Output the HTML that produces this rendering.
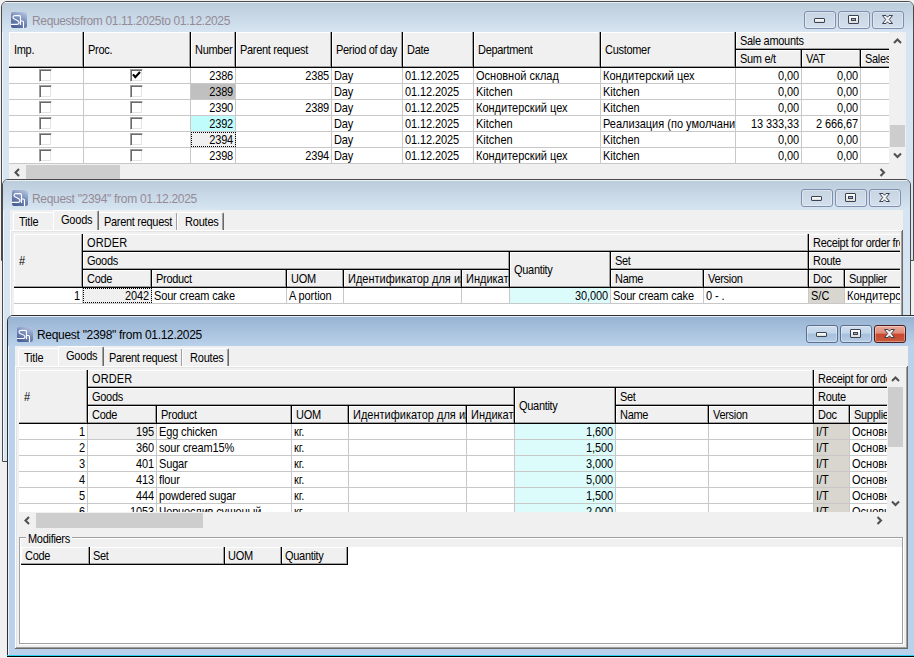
<!DOCTYPE html><html><head><meta charset="utf-8"><style>html,body{margin:0;padding:0;}body{width:914px;height:658px;position:relative;overflow:hidden;background:#f0f0f0;font-family:"Liberation Sans",sans-serif;}div{position:absolute;box-sizing:border-box;}.t{transform:scaleY(1.12);}svg{position:absolute;}</style></head><body><div style="left:1px;top:1px;width:913px;height:260px;border:1px solid #4a4a4a;border-radius:6px 6px 0 0;background:#d7e4f2;overflow:hidden;box-shadow:inset 1px 0 0 rgba(255,255,255,0.7)"><div style="left:0;top:0;width:911px;height:30px;background:linear-gradient(#bbccdb,#d7e5f2);border-top:1px solid rgba(255,255,255,0.45)"></div></div><svg style="left:11px;top:12px" width="16" height="16" viewBox="0 0 16 16" preserveAspectRatio="none"><defs><linearGradient id="ig11_12" x1="0.8" y1="0" x2="0.3" y2="1"><stop offset="0" stop-color="#b4c4e0"/><stop offset="0.45" stop-color="#7a8fbd"/><stop offset="1" stop-color="#4a5f94"/></linearGradient></defs><path d="M0,2 Q0,0 2,0 L12,0 Q16,0 16,4 L16,13.5 Q16,16 13.5,16 L2,16 Q0,16 0,14 Z" fill="url(#ig11_12)"/><path d="M0,12.3 L5.8,12.3 Q8,12.3 8,10.4 Q8,9.2 6.3,8.4 L3.5,7.1 Q2,6.4 2,5.2 Q2,3.6 4,3.6 L8.3,3.6 Q9.5,3.6 9.5,5 L9.5,13" fill="none" stroke="#fff" stroke-width="1.15"/><path d="M9.5,9 L11.3,9 Q12.5,9 12.5,10.3 L12.5,16" fill="none" stroke="#fff" stroke-width="1.15"/></svg><div class="" style="left:32px;top:13.84px;font-size:12px;line-height:14px;color:#948a96;white-space:nowrap;transform-origin:0 11.16px;letter-spacing:-0.35px;">Requestsfrom 01.11.2025to 01.12.2025</div><div style="left:804px;top:11px;width:32px;height:18px;border:1px solid #7f8eae;border-radius:3px;background:linear-gradient(#c7d4e2,#d3dfec);box-shadow:inset 0 0 0 1px rgba(255,255,255,0.35)"></div><div style="left:838px;top:11px;width:32px;height:18px;border:1px solid #7f8eae;border-radius:3px;background:linear-gradient(#c7d4e2,#d3dfec);box-shadow:inset 0 0 0 1px rgba(255,255,255,0.35)"></div><div style="left:872px;top:11px;width:32px;height:18px;border:1px solid #7f8eae;border-radius:3px;background:linear-gradient(#c7d4e2,#d3dfec);box-shadow:inset 0 0 0 1px rgba(255,255,255,0.35)"></div><div style="left:814px;top:18px;width:11px;height:5px;border:1px solid #3a4250;border-radius:1px;background:linear-gradient(#fff,#dcdcdc)"></div><div style="left:848px;top:15px;width:11px;height:9px;border:1px solid #3a4250;border-radius:1px;background:linear-gradient(#fff,#dcdcdc)"><div style="left:2px;top:2px;width:5px;height:3px;border:1px solid #3a4250;background:#9fb0c8"></div></div><svg style="left:882px;top:15px" width="11" height="9" viewBox="0 0 11 9"><path d="M0.5,0.5 L4,0.5 L5.5,2.2 L7,0.5 L10.5,0.5 L7.3,4.5 L10.5,8.5 L7,8.5 L5.5,6.8 L4,8.5 L0.5,8.5 L3.7,4.5 Z" fill="#f4f4f4" stroke="#3a4250" stroke-width="1" stroke-linejoin="round"/></svg><div style="left:9px;top:32px;width:897px;height:147px;background:#f0f0f0;"></div><div style="left:9px;top:68px;width:880px;height:95px;background:#fff;"></div><div style="left:9px;top:32px;width:880px;height:35px;background:#f0f0f0;"></div><div style="left:9px;top:32px;width:880px;height:1px;background:#fff;"></div><div style="left:0;top:0;width:889px;height:658px;overflow:hidden"><div style="left:9px;top:32px;width:74px;height:1px;background:#ffffff;"></div><div style="left:9px;top:32px;width:1px;height:35px;background:#ffffff;"></div><div style="left:82px;top:32px;width:1px;height:35px;background:#a0a0a0;"></div><div style="left:9px;top:66px;width:74px;height:1px;background:#a0a0a0;"></div><div style="left:83px;top:32px;width:1px;height:36px;background:#000;"></div><div style="left:9px;top:67px;width:74px;height:1px;background:#000;"></div><div style="left:84px;top:32px;width:106px;height:1px;background:#ffffff;"></div><div style="left:84px;top:32px;width:1px;height:35px;background:#ffffff;"></div><div style="left:189px;top:32px;width:1px;height:35px;background:#a0a0a0;"></div><div style="left:84px;top:66px;width:106px;height:1px;background:#a0a0a0;"></div><div style="left:190px;top:32px;width:1px;height:36px;background:#000;"></div><div style="left:83px;top:67px;width:107px;height:1px;background:#000;"></div><div style="left:191px;top:32px;width:44px;height:1px;background:#ffffff;"></div><div style="left:191px;top:32px;width:1px;height:35px;background:#ffffff;"></div><div style="left:234px;top:32px;width:1px;height:35px;background:#a0a0a0;"></div><div style="left:191px;top:66px;width:44px;height:1px;background:#a0a0a0;"></div><div style="left:235px;top:32px;width:1px;height:36px;background:#000;"></div><div style="left:190px;top:67px;width:45px;height:1px;background:#000;"></div><div style="left:236px;top:32px;width:95px;height:1px;background:#ffffff;"></div><div style="left:236px;top:32px;width:1px;height:35px;background:#ffffff;"></div><div style="left:330px;top:32px;width:1px;height:35px;background:#a0a0a0;"></div><div style="left:236px;top:66px;width:95px;height:1px;background:#a0a0a0;"></div><div style="left:331px;top:32px;width:1px;height:36px;background:#000;"></div><div style="left:235px;top:67px;width:96px;height:1px;background:#000;"></div><div style="left:332px;top:32px;width:70px;height:1px;background:#ffffff;"></div><div style="left:332px;top:32px;width:1px;height:35px;background:#ffffff;"></div><div style="left:401px;top:32px;width:1px;height:35px;background:#a0a0a0;"></div><div style="left:332px;top:66px;width:70px;height:1px;background:#a0a0a0;"></div><div style="left:402px;top:32px;width:1px;height:36px;background:#000;"></div><div style="left:331px;top:67px;width:71px;height:1px;background:#000;"></div><div style="left:403px;top:32px;width:70px;height:1px;background:#ffffff;"></div><div style="left:403px;top:32px;width:1px;height:35px;background:#ffffff;"></div><div style="left:472px;top:32px;width:1px;height:35px;background:#a0a0a0;"></div><div style="left:403px;top:66px;width:70px;height:1px;background:#a0a0a0;"></div><div style="left:473px;top:32px;width:1px;height:36px;background:#000;"></div><div style="left:402px;top:67px;width:71px;height:1px;background:#000;"></div><div style="left:474px;top:32px;width:126px;height:1px;background:#ffffff;"></div><div style="left:474px;top:32px;width:1px;height:35px;background:#ffffff;"></div><div style="left:599px;top:32px;width:1px;height:35px;background:#a0a0a0;"></div><div style="left:474px;top:66px;width:126px;height:1px;background:#a0a0a0;"></div><div style="left:600px;top:32px;width:1px;height:36px;background:#000;"></div><div style="left:473px;top:67px;width:127px;height:1px;background:#000;"></div><div style="left:601px;top:32px;width:134px;height:1px;background:#ffffff;"></div><div style="left:601px;top:32px;width:1px;height:35px;background:#ffffff;"></div><div style="left:734px;top:32px;width:1px;height:35px;background:#a0a0a0;"></div><div style="left:601px;top:66px;width:134px;height:1px;background:#a0a0a0;"></div><div style="left:735px;top:32px;width:1px;height:36px;background:#000;"></div><div style="left:600px;top:67px;width:135px;height:1px;background:#000;"></div><div style="left:736px;top:32px;width:464px;height:1px;background:#ffffff;"></div><div style="left:736px;top:32px;width:1px;height:17px;background:#ffffff;"></div><div style="left:1199px;top:32px;width:1px;height:17px;background:#a0a0a0;"></div><div style="left:736px;top:48px;width:464px;height:1px;background:#a0a0a0;"></div><div style="left:1200px;top:32px;width:1px;height:18px;background:#000;"></div><div style="left:735px;top:49px;width:465px;height:1px;background:#000;"></div><div style="left:736px;top:50px;width:65px;height:1px;background:#ffffff;"></div><div style="left:736px;top:50px;width:1px;height:17px;background:#ffffff;"></div><div style="left:800px;top:50px;width:1px;height:17px;background:#a0a0a0;"></div><div style="left:736px;top:66px;width:65px;height:1px;background:#a0a0a0;"></div><div style="left:801px;top:49px;width:1px;height:19px;background:#000;"></div><div style="left:735px;top:67px;width:66px;height:1px;background:#000;"></div><div style="left:802px;top:50px;width:58px;height:1px;background:#ffffff;"></div><div style="left:802px;top:50px;width:1px;height:17px;background:#ffffff;"></div><div style="left:859px;top:50px;width:1px;height:17px;background:#a0a0a0;"></div><div style="left:802px;top:66px;width:58px;height:1px;background:#a0a0a0;"></div><div style="left:860px;top:49px;width:1px;height:19px;background:#000;"></div><div style="left:801px;top:67px;width:59px;height:1px;background:#000;"></div><div style="left:861px;top:50px;width:99px;height:1px;background:#ffffff;"></div><div style="left:861px;top:50px;width:1px;height:17px;background:#ffffff;"></div><div style="left:959px;top:50px;width:1px;height:17px;background:#a0a0a0;"></div><div style="left:861px;top:66px;width:99px;height:1px;background:#a0a0a0;"></div><div style="left:960px;top:49px;width:1px;height:19px;background:#000;"></div><div style="left:860px;top:67px;width:100px;height:1px;background:#000;"></div></div><div class="t" style="left:14px;top:43.19px;font-size:11px;line-height:14px;color:#000;white-space:nowrap;transform-origin:0 10.81px;letter-spacing:-0.3px;">Imp.</div><div class="t" style="left:88px;top:43.19px;font-size:11px;line-height:14px;color:#000;white-space:nowrap;transform-origin:0 10.81px;letter-spacing:-0.3px;">Proc.</div><div class="t" style="left:195px;top:43.19px;font-size:11px;line-height:14px;color:#000;white-space:nowrap;transform-origin:0 10.81px;letter-spacing:-0.3px;">Number</div><div class="t" style="left:240px;top:43.19px;font-size:11px;line-height:14px;color:#000;white-space:nowrap;transform-origin:0 10.81px;letter-spacing:-0.3px;">Parent request</div><div class="t" style="left:336px;top:43.19px;font-size:11px;line-height:14px;color:#000;white-space:nowrap;transform-origin:0 10.81px;letter-spacing:-0.3px;">Period of day</div><div class="t" style="left:407px;top:43.19px;font-size:11px;line-height:14px;color:#000;white-space:nowrap;transform-origin:0 10.81px;letter-spacing:-0.3px;">Date</div><div class="t" style="left:478px;top:43.19px;font-size:11px;line-height:14px;color:#000;white-space:nowrap;transform-origin:0 10.81px;letter-spacing:-0.3px;">Department</div><div class="t" style="left:605px;top:43.19px;font-size:11px;line-height:14px;color:#000;white-space:nowrap;transform-origin:0 10.81px;letter-spacing:-0.3px;">Customer</div><div class="t" style="left:740px;top:34.19px;font-size:11px;line-height:14px;color:#000;white-space:nowrap;transform-origin:0 10.81px;letter-spacing:-0.3px;">Sale amounts</div><div class="t" style="left:740px;top:52.19px;font-size:11px;line-height:14px;color:#000;white-space:nowrap;transform-origin:0 10.81px;letter-spacing:-0.3px;">Sum e/t</div><div class="t" style="left:806px;top:52.19px;font-size:11px;line-height:14px;color:#000;white-space:nowrap;transform-origin:0 10.81px;letter-spacing:-0.3px;">VAT</div><div style="left:861px;top:40px;width:28px;height:26px;overflow:hidden;"><div class="t" style="left:4px;top:12.19px;font-size:11px;line-height:14px;color:#000;white-space:nowrap;transform-origin:0 10.81px;letter-spacing:-0.3px;">Sales</div></div><div style="left:9px;top:83px;width:880px;height:1px;background:#c8c8c8;"></div><div style="left:9px;top:99px;width:880px;height:1px;background:#c8c8c8;"></div><div style="left:191px;top:84px;width:44px;height:15px;background:#c0c0c0;"></div><div style="left:9px;top:115px;width:880px;height:1px;background:#c8c8c8;"></div><div style="left:9px;top:131px;width:880px;height:1px;background:#c8c8c8;"></div><div style="left:191px;top:116px;width:44px;height:15px;background:#c0fcfc;"></div><div style="left:9px;top:147px;width:880px;height:1px;background:#c8c8c8;"></div><div style="left:191px;top:132px;width:44px;height:15px;background:#f0f0f0;"></div><div style="left:9px;top:163px;width:880px;height:1px;background:#c8c8c8;"></div><div style="left:83px;top:68px;width:1px;height:95px;background:#c8c8c8;"></div><div style="left:190px;top:68px;width:1px;height:95px;background:#c8c8c8;"></div><div style="left:235px;top:68px;width:1px;height:95px;background:#c8c8c8;"></div><div style="left:331px;top:68px;width:1px;height:95px;background:#c8c8c8;"></div><div style="left:402px;top:68px;width:1px;height:95px;background:#c8c8c8;"></div><div style="left:473px;top:68px;width:1px;height:95px;background:#c8c8c8;"></div><div style="left:600px;top:68px;width:1px;height:95px;background:#c8c8c8;"></div><div style="left:735px;top:68px;width:1px;height:95px;background:#c8c8c8;"></div><div style="left:801px;top:68px;width:1px;height:95px;background:#c8c8c8;"></div><div style="left:860px;top:68px;width:1px;height:95px;background:#c8c8c8;"></div><div style="left:191px;top:132px;width:45px;height:15px;border:1px dotted #000;"></div><div style="left:39px;top:69px;width:13px;height:13px;background:#fff;border-top:1px solid #a0a0a0;border-left:1px solid #a0a0a0;border-right:1px solid #fff;border-bottom:1px solid #fff;box-shadow:inset 1px 1px 0 #696969, inset -1px -1px 0 #e3e3e3"></div><div style="left:130px;top:69px;width:13px;height:13px;background:#fff;border-top:1px solid #a0a0a0;border-left:1px solid #a0a0a0;border-right:1px solid #fff;border-bottom:1px solid #fff;box-shadow:inset 1px 1px 0 #696969, inset -1px -1px 0 #e3e3e3"></div><svg style="left:130px;top:69px" width="12" height="12" viewBox="0 0 12 12"><path d="M3,5.4 L5.3,8.2 L10,3" fill="none" stroke="#000" stroke-width="2.1"/></svg><div style="left:191px;top:60px;width:44px;height:26px;overflow:hidden;"><div class="t" style="right:2px;top:9.19px;transform-origin:0 10.81px;font-size:11px;line-height:14px;white-space:nowrap;letter-spacing:-0.2px;color:#000">2386</div></div><div style="left:236px;top:60px;width:95px;height:26px;overflow:hidden;"><div class="t" style="right:2px;top:9.19px;transform-origin:0 10.81px;font-size:11px;line-height:14px;white-space:nowrap;letter-spacing:-0.2px;color:#000">2385</div></div><div style="left:332px;top:60px;width:70px;height:26px;overflow:hidden;"><div class="t" style="left:2px;top:9.19px;font-size:11px;line-height:14px;color:#000;white-space:nowrap;transform-origin:0 10.81px;letter-spacing:-0.2px;">Day</div></div><div style="left:403px;top:60px;width:70px;height:26px;overflow:hidden;"><div class="t" style="left:2px;top:9.19px;font-size:11px;line-height:14px;color:#000;white-space:nowrap;transform-origin:0 10.81px;letter-spacing:-0.1px;">01.12.2025</div></div><div style="left:474px;top:60px;width:126px;height:26px;overflow:hidden;"><div class="t" style="left:2px;top:9.19px;font-size:11px;line-height:14px;color:#000;white-space:nowrap;transform-origin:0 10.81px;letter-spacing:0px;">Основной склад</div></div><div style="left:601px;top:60px;width:134px;height:26px;overflow:hidden;"><div class="t" style="left:2px;top:9.19px;font-size:11px;line-height:14px;color:#000;white-space:nowrap;transform-origin:0 10.81px;letter-spacing:0px;">Кондитерский цех</div></div><div style="left:736px;top:60px;width:65px;height:26px;overflow:hidden;"><div class="t" style="right:2px;top:9.19px;transform-origin:0 10.81px;font-size:11px;line-height:14px;white-space:nowrap;letter-spacing:-0.1px;color:#000">0,00</div></div><div style="left:802px;top:60px;width:58px;height:26px;overflow:hidden;"><div class="t" style="right:2px;top:9.19px;transform-origin:0 10.81px;font-size:11px;line-height:14px;white-space:nowrap;letter-spacing:-0.1px;color:#000">0,00</div></div><div style="left:39px;top:85px;width:13px;height:13px;background:#fff;border-top:1px solid #a0a0a0;border-left:1px solid #a0a0a0;border-right:1px solid #fff;border-bottom:1px solid #fff;box-shadow:inset 1px 1px 0 #696969, inset -1px -1px 0 #e3e3e3"></div><div style="left:130px;top:85px;width:13px;height:13px;background:#fff;border-top:1px solid #a0a0a0;border-left:1px solid #a0a0a0;border-right:1px solid #fff;border-bottom:1px solid #fff;box-shadow:inset 1px 1px 0 #696969, inset -1px -1px 0 #e3e3e3"></div><div style="left:191px;top:76px;width:44px;height:26px;overflow:hidden;"><div class="t" style="right:2px;top:9.19px;transform-origin:0 10.81px;font-size:11px;line-height:14px;white-space:nowrap;letter-spacing:-0.2px;color:#000">2389</div></div><div style="left:236px;top:76px;width:95px;height:26px;overflow:hidden;"><div class="t" style="right:2px;top:9.19px;transform-origin:0 10.81px;font-size:11px;line-height:14px;white-space:nowrap;letter-spacing:-0.2px;color:#000"></div></div><div style="left:332px;top:76px;width:70px;height:26px;overflow:hidden;"><div class="t" style="left:2px;top:9.19px;font-size:11px;line-height:14px;color:#000;white-space:nowrap;transform-origin:0 10.81px;letter-spacing:-0.2px;">Day</div></div><div style="left:403px;top:76px;width:70px;height:26px;overflow:hidden;"><div class="t" style="left:2px;top:9.19px;font-size:11px;line-height:14px;color:#000;white-space:nowrap;transform-origin:0 10.81px;letter-spacing:-0.1px;">01.12.2025</div></div><div style="left:474px;top:76px;width:126px;height:26px;overflow:hidden;"><div class="t" style="left:2px;top:9.19px;font-size:11px;line-height:14px;color:#000;white-space:nowrap;transform-origin:0 10.81px;letter-spacing:0px;">Kitchen</div></div><div style="left:601px;top:76px;width:134px;height:26px;overflow:hidden;"><div class="t" style="left:2px;top:9.19px;font-size:11px;line-height:14px;color:#000;white-space:nowrap;transform-origin:0 10.81px;letter-spacing:0px;">Kitchen</div></div><div style="left:736px;top:76px;width:65px;height:26px;overflow:hidden;"><div class="t" style="right:2px;top:9.19px;transform-origin:0 10.81px;font-size:11px;line-height:14px;white-space:nowrap;letter-spacing:-0.1px;color:#000">0,00</div></div><div style="left:802px;top:76px;width:58px;height:26px;overflow:hidden;"><div class="t" style="right:2px;top:9.19px;transform-origin:0 10.81px;font-size:11px;line-height:14px;white-space:nowrap;letter-spacing:-0.1px;color:#000">0,00</div></div><div style="left:39px;top:101px;width:13px;height:13px;background:#fff;border-top:1px solid #a0a0a0;border-left:1px solid #a0a0a0;border-right:1px solid #fff;border-bottom:1px solid #fff;box-shadow:inset 1px 1px 0 #696969, inset -1px -1px 0 #e3e3e3"></div><div style="left:130px;top:101px;width:13px;height:13px;background:#fff;border-top:1px solid #a0a0a0;border-left:1px solid #a0a0a0;border-right:1px solid #fff;border-bottom:1px solid #fff;box-shadow:inset 1px 1px 0 #696969, inset -1px -1px 0 #e3e3e3"></div><div style="left:191px;top:92px;width:44px;height:26px;overflow:hidden;"><div class="t" style="right:2px;top:9.19px;transform-origin:0 10.81px;font-size:11px;line-height:14px;white-space:nowrap;letter-spacing:-0.2px;color:#000">2390</div></div><div style="left:236px;top:92px;width:95px;height:26px;overflow:hidden;"><div class="t" style="right:2px;top:9.19px;transform-origin:0 10.81px;font-size:11px;line-height:14px;white-space:nowrap;letter-spacing:-0.2px;color:#000">2389</div></div><div style="left:332px;top:92px;width:70px;height:26px;overflow:hidden;"><div class="t" style="left:2px;top:9.19px;font-size:11px;line-height:14px;color:#000;white-space:nowrap;transform-origin:0 10.81px;letter-spacing:-0.2px;">Day</div></div><div style="left:403px;top:92px;width:70px;height:26px;overflow:hidden;"><div class="t" style="left:2px;top:9.19px;font-size:11px;line-height:14px;color:#000;white-space:nowrap;transform-origin:0 10.81px;letter-spacing:-0.1px;">01.12.2025</div></div><div style="left:474px;top:92px;width:126px;height:26px;overflow:hidden;"><div class="t" style="left:2px;top:9.19px;font-size:11px;line-height:14px;color:#000;white-space:nowrap;transform-origin:0 10.81px;letter-spacing:0px;">Кондитерский цех</div></div><div style="left:601px;top:92px;width:134px;height:26px;overflow:hidden;"><div class="t" style="left:2px;top:9.19px;font-size:11px;line-height:14px;color:#000;white-space:nowrap;transform-origin:0 10.81px;letter-spacing:0px;">Kitchen</div></div><div style="left:736px;top:92px;width:65px;height:26px;overflow:hidden;"><div class="t" style="right:2px;top:9.19px;transform-origin:0 10.81px;font-size:11px;line-height:14px;white-space:nowrap;letter-spacing:-0.1px;color:#000">0,00</div></div><div style="left:802px;top:92px;width:58px;height:26px;overflow:hidden;"><div class="t" style="right:2px;top:9.19px;transform-origin:0 10.81px;font-size:11px;line-height:14px;white-space:nowrap;letter-spacing:-0.1px;color:#000">0,00</div></div><div style="left:39px;top:117px;width:13px;height:13px;background:#fff;border-top:1px solid #a0a0a0;border-left:1px solid #a0a0a0;border-right:1px solid #fff;border-bottom:1px solid #fff;box-shadow:inset 1px 1px 0 #696969, inset -1px -1px 0 #e3e3e3"></div><div style="left:130px;top:117px;width:13px;height:13px;background:#fff;border-top:1px solid #a0a0a0;border-left:1px solid #a0a0a0;border-right:1px solid #fff;border-bottom:1px solid #fff;box-shadow:inset 1px 1px 0 #696969, inset -1px -1px 0 #e3e3e3"></div><div style="left:191px;top:108px;width:44px;height:26px;overflow:hidden;"><div class="t" style="right:2px;top:9.19px;transform-origin:0 10.81px;font-size:11px;line-height:14px;white-space:nowrap;letter-spacing:-0.2px;color:#000">2392</div></div><div style="left:236px;top:108px;width:95px;height:26px;overflow:hidden;"><div class="t" style="right:2px;top:9.19px;transform-origin:0 10.81px;font-size:11px;line-height:14px;white-space:nowrap;letter-spacing:-0.2px;color:#000"></div></div><div style="left:332px;top:108px;width:70px;height:26px;overflow:hidden;"><div class="t" style="left:2px;top:9.19px;font-size:11px;line-height:14px;color:#000;white-space:nowrap;transform-origin:0 10.81px;letter-spacing:-0.2px;">Day</div></div><div style="left:403px;top:108px;width:70px;height:26px;overflow:hidden;"><div class="t" style="left:2px;top:9.19px;font-size:11px;line-height:14px;color:#000;white-space:nowrap;transform-origin:0 10.81px;letter-spacing:-0.1px;">01.12.2025</div></div><div style="left:474px;top:108px;width:126px;height:26px;overflow:hidden;"><div class="t" style="left:2px;top:9.19px;font-size:11px;line-height:14px;color:#000;white-space:nowrap;transform-origin:0 10.81px;letter-spacing:0px;">Kitchen</div></div><div style="left:601px;top:108px;width:134px;height:26px;overflow:hidden;"><div class="t" style="left:2px;top:9.19px;font-size:11px;line-height:14px;color:#000;white-space:nowrap;transform-origin:0 10.81px;letter-spacing:0px;">Реализация (по умолчанию)</div></div><div style="left:736px;top:108px;width:65px;height:26px;overflow:hidden;"><div class="t" style="right:2px;top:9.19px;transform-origin:0 10.81px;font-size:11px;line-height:14px;white-space:nowrap;letter-spacing:-0.1px;color:#000">13 333,33</div></div><div style="left:802px;top:108px;width:58px;height:26px;overflow:hidden;"><div class="t" style="right:2px;top:9.19px;transform-origin:0 10.81px;font-size:11px;line-height:14px;white-space:nowrap;letter-spacing:-0.1px;color:#000">2 666,67</div></div><div style="left:39px;top:133px;width:13px;height:13px;background:#fff;border-top:1px solid #a0a0a0;border-left:1px solid #a0a0a0;border-right:1px solid #fff;border-bottom:1px solid #fff;box-shadow:inset 1px 1px 0 #696969, inset -1px -1px 0 #e3e3e3"></div><div style="left:130px;top:133px;width:13px;height:13px;background:#fff;border-top:1px solid #a0a0a0;border-left:1px solid #a0a0a0;border-right:1px solid #fff;border-bottom:1px solid #fff;box-shadow:inset 1px 1px 0 #696969, inset -1px -1px 0 #e3e3e3"></div><div style="left:191px;top:124px;width:44px;height:26px;overflow:hidden;"><div class="t" style="right:2px;top:9.19px;transform-origin:0 10.81px;font-size:11px;line-height:14px;white-space:nowrap;letter-spacing:-0.2px;color:#000">2394</div></div><div style="left:236px;top:124px;width:95px;height:26px;overflow:hidden;"><div class="t" style="right:2px;top:9.19px;transform-origin:0 10.81px;font-size:11px;line-height:14px;white-space:nowrap;letter-spacing:-0.2px;color:#000"></div></div><div style="left:332px;top:124px;width:70px;height:26px;overflow:hidden;"><div class="t" style="left:2px;top:9.19px;font-size:11px;line-height:14px;color:#000;white-space:nowrap;transform-origin:0 10.81px;letter-spacing:-0.2px;">Day</div></div><div style="left:403px;top:124px;width:70px;height:26px;overflow:hidden;"><div class="t" style="left:2px;top:9.19px;font-size:11px;line-height:14px;color:#000;white-space:nowrap;transform-origin:0 10.81px;letter-spacing:-0.1px;">01.12.2025</div></div><div style="left:474px;top:124px;width:126px;height:26px;overflow:hidden;"><div class="t" style="left:2px;top:9.19px;font-size:11px;line-height:14px;color:#000;white-space:nowrap;transform-origin:0 10.81px;letter-spacing:0px;">Kitchen</div></div><div style="left:601px;top:124px;width:134px;height:26px;overflow:hidden;"><div class="t" style="left:2px;top:9.19px;font-size:11px;line-height:14px;color:#000;white-space:nowrap;transform-origin:0 10.81px;letter-spacing:0px;">Kitchen</div></div><div style="left:736px;top:124px;width:65px;height:26px;overflow:hidden;"><div class="t" style="right:2px;top:9.19px;transform-origin:0 10.81px;font-size:11px;line-height:14px;white-space:nowrap;letter-spacing:-0.1px;color:#000">0,00</div></div><div style="left:802px;top:124px;width:58px;height:26px;overflow:hidden;"><div class="t" style="right:2px;top:9.19px;transform-origin:0 10.81px;font-size:11px;line-height:14px;white-space:nowrap;letter-spacing:-0.1px;color:#000">0,00</div></div><div style="left:39px;top:149px;width:13px;height:13px;background:#fff;border-top:1px solid #a0a0a0;border-left:1px solid #a0a0a0;border-right:1px solid #fff;border-bottom:1px solid #fff;box-shadow:inset 1px 1px 0 #696969, inset -1px -1px 0 #e3e3e3"></div><div style="left:130px;top:149px;width:13px;height:13px;background:#fff;border-top:1px solid #a0a0a0;border-left:1px solid #a0a0a0;border-right:1px solid #fff;border-bottom:1px solid #fff;box-shadow:inset 1px 1px 0 #696969, inset -1px -1px 0 #e3e3e3"></div><div style="left:191px;top:140px;width:44px;height:26px;overflow:hidden;"><div class="t" style="right:2px;top:9.19px;transform-origin:0 10.81px;font-size:11px;line-height:14px;white-space:nowrap;letter-spacing:-0.2px;color:#000">2398</div></div><div style="left:236px;top:140px;width:95px;height:26px;overflow:hidden;"><div class="t" style="right:2px;top:9.19px;transform-origin:0 10.81px;font-size:11px;line-height:14px;white-space:nowrap;letter-spacing:-0.2px;color:#000">2394</div></div><div style="left:332px;top:140px;width:70px;height:26px;overflow:hidden;"><div class="t" style="left:2px;top:9.19px;font-size:11px;line-height:14px;color:#000;white-space:nowrap;transform-origin:0 10.81px;letter-spacing:-0.2px;">Day</div></div><div style="left:403px;top:140px;width:70px;height:26px;overflow:hidden;"><div class="t" style="left:2px;top:9.19px;font-size:11px;line-height:14px;color:#000;white-space:nowrap;transform-origin:0 10.81px;letter-spacing:-0.1px;">01.12.2025</div></div><div style="left:474px;top:140px;width:126px;height:26px;overflow:hidden;"><div class="t" style="left:2px;top:9.19px;font-size:11px;line-height:14px;color:#000;white-space:nowrap;transform-origin:0 10.81px;letter-spacing:0px;">Кондитерский цех</div></div><div style="left:601px;top:140px;width:134px;height:26px;overflow:hidden;"><div class="t" style="left:2px;top:9.19px;font-size:11px;line-height:14px;color:#000;white-space:nowrap;transform-origin:0 10.81px;letter-spacing:0px;">Kitchen</div></div><div style="left:736px;top:140px;width:65px;height:26px;overflow:hidden;"><div class="t" style="right:2px;top:9.19px;transform-origin:0 10.81px;font-size:11px;line-height:14px;white-space:nowrap;letter-spacing:-0.1px;color:#000">0,00</div></div><div style="left:802px;top:140px;width:58px;height:26px;overflow:hidden;"><div class="t" style="right:2px;top:9.19px;transform-origin:0 10.81px;font-size:11px;line-height:14px;white-space:nowrap;letter-spacing:-0.1px;color:#000">0,00</div></div><div style="left:889px;top:32px;width:17px;height:131px;background:#f0f0f0;"></div><div style="left:890px;top:125px;width:15px;height:22px;background:#cdcdcd;"></div><div style="left:9px;top:164px;width:880px;height:15px;background:#f0f0f0;"></div><div style="left:889px;top:163px;width:17px;height:16px;background:#f0f0f0;"></div><div style="left:26px;top:165px;width:94px;height:14px;background:#cdcdcd;"></div><svg style="left:893px;top:38px" width="9" height="7" viewBox="0 0 9 7"><path d="M1,5 L4.5,1.5 L8,5" fill="none" stroke="#505050" stroke-width="2.1"/></svg><svg style="left:893px;top:152px" width="9" height="7" viewBox="0 0 9 7"><path d="M1,1.5 L4.5,5 L8,1.5" fill="none" stroke="#505050" stroke-width="2.1"/></svg><svg style="left:14px;top:168px" width="7" height="9" viewBox="0 0 7 9"><path d="M5,1 L1.5,4.5 L5,8" fill="none" stroke="#505050" stroke-width="2.1"/></svg><svg style="left:879px;top:168px" width="7" height="9" viewBox="0 0 7 9"><path d="M1.5,1 L5,4.5 L1.5,8" fill="none" stroke="#505050" stroke-width="2.1"/></svg><div style="left:2px;top:179px;width:909px;height:283px;border:1px solid #4a4a4a;border-radius:6px 6px 0 0;background:#d7e4f2;overflow:hidden;box-shadow:inset 1px 0 0 rgba(255,255,255,0.7)"><div style="left:0;top:0;width:907px;height:30px;background:linear-gradient(#bbccdb,#d7e5f2);border-top:1px solid rgba(255,255,255,0.45)"></div></div><svg style="left:12px;top:190px" width="16" height="16" viewBox="0 0 16 16" preserveAspectRatio="none"><defs><linearGradient id="ig12_190" x1="0.8" y1="0" x2="0.3" y2="1"><stop offset="0" stop-color="#b4c4e0"/><stop offset="0.45" stop-color="#7a8fbd"/><stop offset="1" stop-color="#4a5f94"/></linearGradient></defs><path d="M0,2 Q0,0 2,0 L12,0 Q16,0 16,4 L16,13.5 Q16,16 13.5,16 L2,16 Q0,16 0,14 Z" fill="url(#ig12_190)"/><path d="M0,12.3 L5.8,12.3 Q8,12.3 8,10.4 Q8,9.2 6.3,8.4 L3.5,7.1 Q2,6.4 2,5.2 Q2,3.6 4,3.6 L8.3,3.6 Q9.5,3.6 9.5,5 L9.5,13" fill="none" stroke="#fff" stroke-width="1.15"/><path d="M9.5,9 L11.3,9 Q12.5,9 12.5,10.3 L12.5,16" fill="none" stroke="#fff" stroke-width="1.15"/></svg><div class="" style="left:32px;top:191.84px;font-size:12px;line-height:14px;color:#948a96;white-space:nowrap;transform-origin:0 11.16px;letter-spacing:-0.3px;">Request "2394" from 01.12.2025</div><div style="left:801px;top:189px;width:32px;height:18px;border:1px solid #7f8eae;border-radius:3px;background:linear-gradient(#c7d4e2,#d3dfec);box-shadow:inset 0 0 0 1px rgba(255,255,255,0.35)"></div><div style="left:835px;top:189px;width:32px;height:18px;border:1px solid #7f8eae;border-radius:3px;background:linear-gradient(#c7d4e2,#d3dfec);box-shadow:inset 0 0 0 1px rgba(255,255,255,0.35)"></div><div style="left:869px;top:189px;width:32px;height:18px;border:1px solid #7f8eae;border-radius:3px;background:linear-gradient(#c7d4e2,#d3dfec);box-shadow:inset 0 0 0 1px rgba(255,255,255,0.35)"></div><div style="left:811px;top:196px;width:11px;height:5px;border:1px solid #3a4250;border-radius:1px;background:linear-gradient(#fff,#dcdcdc)"></div><div style="left:845px;top:193px;width:11px;height:9px;border:1px solid #3a4250;border-radius:1px;background:linear-gradient(#fff,#dcdcdc)"><div style="left:2px;top:2px;width:5px;height:3px;border:1px solid #3a4250;background:#9fb0c8"></div></div><svg style="left:879px;top:193px" width="11" height="9" viewBox="0 0 11 9"><path d="M0.5,0.5 L4,0.5 L5.5,2.2 L7,0.5 L10.5,0.5 L7.3,4.5 L10.5,8.5 L7,8.5 L5.5,6.8 L4,8.5 L0.5,8.5 L3.7,4.5 Z" fill="#f4f4f4" stroke="#3a4250" stroke-width="1" stroke-linejoin="round"/></svg><div style="left:10px;top:210px;width:893px;height:245px;background:#f0f0f0;"></div><div style="left:13px;top:212px;width:41px;height:18px;background:#f0f0f0;border-top:1px solid #fff;border-left:1px solid #fff;border-radius:2px 2px 0 0;"></div><div style="left:98px;top:212px;width:80px;height:18px;background:#f0f0f0;border-top:1px solid #fff;border-left:1px solid #fff;border-radius:2px 2px 0 0;border-right:1px solid #696969;box-shadow:inset -1px 0 0 #a0a0a0;"></div><div style="left:177px;top:212px;width:47px;height:18px;background:#f0f0f0;border-top:1px solid #fff;border-left:1px solid #fff;border-radius:2px 2px 0 0;border-right:1px solid #696969;box-shadow:inset -1px 0 0 #a0a0a0;"></div><div style="left:53px;top:210px;width:46px;height:21px;background:#f0f0f0;border-top:1px solid #fff;border-left:1px solid #fff;border-radius:2px 2px 0 0;border-right:1px solid #696969;box-shadow:inset -1px 0 0 #a0a0a0;"></div><div class="t" style="left:19px;top:215.19px;font-size:11px;line-height:14px;color:#000;white-space:nowrap;transform-origin:0 10.81px;letter-spacing:-0.2px;">Title</div><div class="t" style="left:61px;top:213.19px;font-size:11px;line-height:14px;color:#000;white-space:nowrap;transform-origin:0 10.81px;letter-spacing:-0.2px;">Goods</div><div class="t" style="left:104px;top:215.19px;font-size:11px;line-height:14px;color:#000;white-space:nowrap;transform-origin:0 10.81px;letter-spacing:-0.3px;">Parent request</div><div class="t" style="left:185px;top:215.19px;font-size:11px;line-height:14px;color:#000;white-space:nowrap;transform-origin:0 10.81px;letter-spacing:-0.2px;">Routes</div><div style="left:10px;top:230px;width:892px;height:1px;background:#fff;"></div><div style="left:10px;top:230px;width:1px;height:225px;background:#fff;"></div><div style="left:902px;top:230px;width:1px;height:225px;background:#696969;"></div><div style="left:901px;top:231px;width:1px;height:224px;background:#a0a0a0;"></div><div style="left:11px;top:231px;width:890px;height:1px;background:#e3e3e3;"></div><div style="left:11px;top:231px;width:1px;height:224px;background:#e3e3e3;"></div><div style="left:14px;top:234px;width:886px;height:216px;overflow:hidden;background:#fff"><div style="left:0px;top:0px;width:1200px;height:53px;background:#f0f0f0;"></div><div style="left:0px;top:0px;width:1186px;height:1px;background:#fff;"></div><div style="left:0px;top:0px;width:68px;height:1px;background:#ffffff;"></div><div style="left:0px;top:0px;width:1px;height:53px;background:#ffffff;"></div><div style="left:67px;top:0px;width:1px;height:53px;background:#a0a0a0;"></div><div style="left:0px;top:52px;width:68px;height:1px;background:#a0a0a0;"></div><div style="left:68px;top:0px;width:1px;height:54px;background:#000;"></div><div style="left:0px;top:53px;width:68px;height:1px;background:#000;"></div><div style="left:69px;top:0px;width:725px;height:1px;background:#ffffff;"></div><div style="left:69px;top:0px;width:1px;height:17px;background:#ffffff;"></div><div style="left:793px;top:0px;width:1px;height:17px;background:#a0a0a0;"></div><div style="left:69px;top:16px;width:725px;height:1px;background:#a0a0a0;"></div><div style="left:794px;top:0px;width:1px;height:18px;background:#000;"></div><div style="left:68px;top:17px;width:726px;height:1px;background:#000;"></div><div style="left:795px;top:0px;width:391px;height:1px;background:#ffffff;"></div><div style="left:795px;top:0px;width:1px;height:17px;background:#ffffff;"></div><div style="left:1185px;top:0px;width:1px;height:17px;background:#a0a0a0;"></div><div style="left:795px;top:16px;width:391px;height:1px;background:#a0a0a0;"></div><div style="left:1186px;top:0px;width:1px;height:18px;background:#000;"></div><div style="left:794px;top:17px;width:392px;height:1px;background:#000;"></div><div style="left:69px;top:18px;width:426px;height:1px;background:#ffffff;"></div><div style="left:69px;top:18px;width:1px;height:17px;background:#ffffff;"></div><div style="left:494px;top:18px;width:1px;height:17px;background:#a0a0a0;"></div><div style="left:69px;top:34px;width:426px;height:1px;background:#a0a0a0;"></div><div style="left:495px;top:17px;width:1px;height:19px;background:#000;"></div><div style="left:68px;top:35px;width:427px;height:1px;background:#000;"></div><div style="left:496px;top:18px;width:100px;height:1px;background:#ffffff;"></div><div style="left:496px;top:18px;width:1px;height:35px;background:#ffffff;"></div><div style="left:595px;top:18px;width:1px;height:35px;background:#a0a0a0;"></div><div style="left:496px;top:52px;width:100px;height:1px;background:#a0a0a0;"></div><div style="left:596px;top:17px;width:1px;height:37px;background:#000;"></div><div style="left:495px;top:53px;width:101px;height:1px;background:#000;"></div><div style="left:597px;top:18px;width:197px;height:1px;background:#ffffff;"></div><div style="left:597px;top:18px;width:1px;height:17px;background:#ffffff;"></div><div style="left:793px;top:18px;width:1px;height:17px;background:#a0a0a0;"></div><div style="left:597px;top:34px;width:197px;height:1px;background:#a0a0a0;"></div><div style="left:794px;top:17px;width:1px;height:19px;background:#000;"></div><div style="left:596px;top:35px;width:198px;height:1px;background:#000;"></div><div style="left:795px;top:18px;width:391px;height:1px;background:#ffffff;"></div><div style="left:795px;top:18px;width:1px;height:17px;background:#ffffff;"></div><div style="left:1185px;top:18px;width:1px;height:17px;background:#a0a0a0;"></div><div style="left:795px;top:34px;width:391px;height:1px;background:#a0a0a0;"></div><div style="left:1186px;top:17px;width:1px;height:19px;background:#000;"></div><div style="left:794px;top:35px;width:392px;height:1px;background:#000;"></div><div style="left:69px;top:36px;width:68px;height:1px;background:#ffffff;"></div><div style="left:69px;top:36px;width:1px;height:17px;background:#ffffff;"></div><div style="left:136px;top:36px;width:1px;height:17px;background:#a0a0a0;"></div><div style="left:69px;top:52px;width:68px;height:1px;background:#a0a0a0;"></div><div style="left:137px;top:35px;width:1px;height:19px;background:#000;"></div><div style="left:68px;top:53px;width:69px;height:1px;background:#000;"></div><div style="left:138px;top:36px;width:134px;height:1px;background:#ffffff;"></div><div style="left:138px;top:36px;width:1px;height:17px;background:#ffffff;"></div><div style="left:271px;top:36px;width:1px;height:17px;background:#a0a0a0;"></div><div style="left:138px;top:52px;width:134px;height:1px;background:#a0a0a0;"></div><div style="left:272px;top:35px;width:1px;height:19px;background:#000;"></div><div style="left:137px;top:53px;width:135px;height:1px;background:#000;"></div><div style="left:273px;top:36px;width:56px;height:1px;background:#ffffff;"></div><div style="left:273px;top:36px;width:1px;height:17px;background:#ffffff;"></div><div style="left:328px;top:36px;width:1px;height:17px;background:#a0a0a0;"></div><div style="left:273px;top:52px;width:56px;height:1px;background:#a0a0a0;"></div><div style="left:329px;top:35px;width:1px;height:19px;background:#000;"></div><div style="left:272px;top:53px;width:57px;height:1px;background:#000;"></div><div style="left:330px;top:36px;width:117px;height:1px;background:#ffffff;"></div><div style="left:330px;top:36px;width:1px;height:17px;background:#ffffff;"></div><div style="left:446px;top:36px;width:1px;height:17px;background:#a0a0a0;"></div><div style="left:330px;top:52px;width:117px;height:1px;background:#a0a0a0;"></div><div style="left:447px;top:35px;width:1px;height:19px;background:#000;"></div><div style="left:329px;top:53px;width:118px;height:1px;background:#000;"></div><div style="left:448px;top:36px;width:47px;height:1px;background:#ffffff;"></div><div style="left:448px;top:36px;width:1px;height:17px;background:#ffffff;"></div><div style="left:494px;top:36px;width:1px;height:17px;background:#a0a0a0;"></div><div style="left:448px;top:52px;width:47px;height:1px;background:#a0a0a0;"></div><div style="left:495px;top:35px;width:1px;height:19px;background:#000;"></div><div style="left:447px;top:53px;width:48px;height:1px;background:#000;"></div><div style="left:597px;top:36px;width:92px;height:1px;background:#ffffff;"></div><div style="left:597px;top:36px;width:1px;height:17px;background:#ffffff;"></div><div style="left:688px;top:36px;width:1px;height:17px;background:#a0a0a0;"></div><div style="left:597px;top:52px;width:92px;height:1px;background:#a0a0a0;"></div><div style="left:689px;top:35px;width:1px;height:19px;background:#000;"></div><div style="left:596px;top:53px;width:93px;height:1px;background:#000;"></div><div style="left:690px;top:36px;width:104px;height:1px;background:#ffffff;"></div><div style="left:690px;top:36px;width:1px;height:17px;background:#ffffff;"></div><div style="left:793px;top:36px;width:1px;height:17px;background:#a0a0a0;"></div><div style="left:690px;top:52px;width:104px;height:1px;background:#a0a0a0;"></div><div style="left:794px;top:35px;width:1px;height:19px;background:#000;"></div><div style="left:689px;top:53px;width:105px;height:1px;background:#000;"></div><div style="left:795px;top:36px;width:35px;height:1px;background:#ffffff;"></div><div style="left:795px;top:36px;width:1px;height:17px;background:#ffffff;"></div><div style="left:829px;top:36px;width:1px;height:17px;background:#a0a0a0;"></div><div style="left:795px;top:52px;width:35px;height:1px;background:#a0a0a0;"></div><div style="left:830px;top:35px;width:1px;height:19px;background:#000;"></div><div style="left:794px;top:53px;width:36px;height:1px;background:#000;"></div><div style="left:831px;top:36px;width:155px;height:1px;background:#ffffff;"></div><div style="left:831px;top:36px;width:1px;height:17px;background:#ffffff;"></div><div style="left:985px;top:36px;width:1px;height:17px;background:#a0a0a0;"></div><div style="left:831px;top:52px;width:155px;height:1px;background:#a0a0a0;"></div><div style="left:986px;top:35px;width:1px;height:19px;background:#000;"></div><div style="left:830px;top:53px;width:156px;height:1px;background:#000;"></div><div class="t" style="left:5px;top:20.19px;font-size:11px;line-height:14px;color:#000;white-space:nowrap;transform-origin:0 10.81px;letter-spacing:0px;">#</div><div class="t" style="left:73px;top:2.19px;font-size:11px;line-height:14px;color:#000;white-space:nowrap;transform-origin:0 10.81px;letter-spacing:0.1px;">ORDER</div><div class="t" style="left:799px;top:2.19px;font-size:11px;line-height:14px;color:#000;white-space:nowrap;transform-origin:0 10.81px;letter-spacing:-0.3px;">Receipt for order from</div><div class="t" style="left:73px;top:20.19px;font-size:11px;line-height:14px;color:#000;white-space:nowrap;transform-origin:0 10.81px;letter-spacing:-0.3px;">Goods</div><div class="t" style="left:500px;top:29.19px;font-size:11px;line-height:14px;color:#000;white-space:nowrap;transform-origin:0 10.81px;letter-spacing:-0.3px;">Quantity</div><div class="t" style="left:601px;top:20.19px;font-size:11px;line-height:14px;color:#000;white-space:nowrap;transform-origin:0 10.81px;letter-spacing:-0.3px;">Set</div><div class="t" style="left:799px;top:20.19px;font-size:11px;line-height:14px;color:#000;white-space:nowrap;transform-origin:0 10.81px;letter-spacing:-0.3px;">Route</div><div style="left:69px;top:29px;width:68px;height:26px;overflow:hidden;"><div class="t" style="left:4px;top:9.19px;font-size:11px;line-height:14px;color:#000;white-space:nowrap;transform-origin:0 10.81px;letter-spacing:-0.3px;">Code</div></div><div style="left:138px;top:29px;width:134px;height:26px;overflow:hidden;"><div class="t" style="left:4px;top:9.19px;font-size:11px;line-height:14px;color:#000;white-space:nowrap;transform-origin:0 10.81px;letter-spacing:-0.3px;">Product</div></div><div style="left:273px;top:29px;width:56px;height:26px;overflow:hidden;"><div class="t" style="left:4px;top:9.19px;font-size:11px;line-height:14px;color:#000;white-space:nowrap;transform-origin:0 10.81px;letter-spacing:-0.3px;">UOM</div></div><div style="left:330px;top:29px;width:117px;height:26px;overflow:hidden;"><div class="t" style="left:4px;top:9.19px;font-size:11px;line-height:14px;color:#000;white-space:nowrap;transform-origin:0 10.81px;letter-spacing:0px;">Идентификатор для изделия</div></div><div style="left:448px;top:29px;width:47px;height:26px;overflow:hidden;"><div class="t" style="left:4px;top:9.19px;font-size:11px;line-height:14px;color:#000;white-space:nowrap;transform-origin:0 10.81px;letter-spacing:0px;">Индикатор</div></div><div style="left:597px;top:29px;width:92px;height:26px;overflow:hidden;"><div class="t" style="left:4px;top:9.19px;font-size:11px;line-height:14px;color:#000;white-space:nowrap;transform-origin:0 10.81px;letter-spacing:-0.3px;">Name</div></div><div style="left:690px;top:29px;width:104px;height:26px;overflow:hidden;"><div class="t" style="left:4px;top:9.19px;font-size:11px;line-height:14px;color:#000;white-space:nowrap;transform-origin:0 10.81px;letter-spacing:-0.3px;">Version</div></div><div style="left:795px;top:29px;width:35px;height:26px;overflow:hidden;"><div class="t" style="left:4px;top:9.19px;font-size:11px;line-height:14px;color:#000;white-space:nowrap;transform-origin:0 10.81px;letter-spacing:-0.3px;">Doc</div></div><div style="left:831px;top:29px;width:155px;height:26px;overflow:hidden;"><div class="t" style="left:4px;top:9.19px;font-size:11px;line-height:14px;color:#000;white-space:nowrap;transform-origin:0 10.81px;letter-spacing:-0.3px;">Supplier</div></div><div style="left:0px;top:69px;width:1186px;height:1px;background:#c8c8c8;"></div><div style="left:496px;top:54px;width:100px;height:15px;background:#dcfcfc;"></div><div style="left:795px;top:54px;width:35px;height:15px;background:#d9d5cf;"></div><div style="left:69px;top:54px;width:68px;height:15px;background:#f0f0f0;"></div><div style="left:68px;top:54px;width:1px;height:16px;background:#c8c8c8;"></div><div style="left:137px;top:54px;width:1px;height:16px;background:#c8c8c8;"></div><div style="left:272px;top:54px;width:1px;height:16px;background:#c8c8c8;"></div><div style="left:329px;top:54px;width:1px;height:16px;background:#c8c8c8;"></div><div style="left:447px;top:54px;width:1px;height:16px;background:#c8c8c8;"></div><div style="left:495px;top:54px;width:1px;height:16px;background:#c8c8c8;"></div><div style="left:596px;top:54px;width:1px;height:16px;background:#c8c8c8;"></div><div style="left:689px;top:54px;width:1px;height:16px;background:#c8c8c8;"></div><div style="left:794px;top:54px;width:1px;height:16px;background:#c8c8c8;"></div><div style="left:830px;top:54px;width:1px;height:16px;background:#c8c8c8;"></div><div style="left:1px;top:46px;width:67px;height:26px;overflow:hidden;"><div class="t" style="right:2px;top:9.19px;transform-origin:0 10.81px;font-size:11px;line-height:14px;white-space:nowrap;letter-spacing:0px;color:#000">1</div></div><div style="left:69px;top:46px;width:68px;height:26px;overflow:hidden;"><div class="t" style="right:2px;top:9.19px;transform-origin:0 10.81px;font-size:11px;line-height:14px;white-space:nowrap;letter-spacing:-0.1px;color:#000">2042</div></div><div style="left:138px;top:46px;width:134px;height:26px;overflow:hidden;"><div class="t" style="left:2px;top:9.19px;font-size:11px;line-height:14px;color:#000;white-space:nowrap;transform-origin:0 10.81px;letter-spacing:-0.15px;">Sour cream cake</div></div><div style="left:273px;top:46px;width:56px;height:26px;overflow:hidden;"><div class="t" style="left:2px;top:9.19px;font-size:11px;line-height:14px;color:#000;white-space:nowrap;transform-origin:0 10.81px;letter-spacing:-0.1px;">A portion</div></div><div style="left:496px;top:46px;width:100px;height:26px;overflow:hidden;"><div class="t" style="right:2px;top:9.19px;transform-origin:0 10.81px;font-size:11px;line-height:14px;white-space:nowrap;letter-spacing:-0.1px;color:#000">30,000</div></div><div style="left:597px;top:46px;width:92px;height:26px;overflow:hidden;"><div class="t" style="left:2px;top:9.19px;font-size:11px;line-height:14px;color:#000;white-space:nowrap;transform-origin:0 10.81px;letter-spacing:-0.15px;">Sour cream cake</div></div><div style="left:690px;top:46px;width:104px;height:26px;overflow:hidden;"><div class="t" style="left:2px;top:9.19px;font-size:11px;line-height:14px;color:#000;white-space:nowrap;transform-origin:0 10.81px;letter-spacing:-0.1px;">0 - .</div></div><div style="left:795px;top:46px;width:35px;height:26px;overflow:hidden;"><div class="t" style="left:2px;top:9.19px;font-size:11px;line-height:14px;color:#000;white-space:nowrap;transform-origin:0 10.81px;letter-spacing:0px;">S/C</div></div><div style="left:831px;top:46px;width:155px;height:26px;overflow:hidden;"><div class="t" style="left:2px;top:9.19px;font-size:11px;line-height:14px;color:#000;white-space:nowrap;transform-origin:0 10.81px;letter-spacing:0px;">Кондитерский цех</div></div><div style="left:69px;top:54px;width:69px;height:15px;border:1px dotted #000;"></div></div><div style="left:7px;top:315px;width:914px;height:342px;border:1px solid #303030;border-radius:6px 6px 0 0;background:#b9d1ea;overflow:hidden;box-shadow:inset 1px 0 0 rgba(255,255,255,0.7)"><div style="left:0;top:0;width:912px;height:30px;background:linear-gradient(#98b3d2,#b9d1ea);border-top:1px solid rgba(255,255,255,0.6)"></div></div><svg style="left:17px;top:327px" width="16" height="15" viewBox="0 0 16 16" preserveAspectRatio="none"><defs><linearGradient id="ig17_327" x1="0.8" y1="0" x2="0.3" y2="1"><stop offset="0" stop-color="#b4c4e0"/><stop offset="0.45" stop-color="#7a8fbd"/><stop offset="1" stop-color="#4a5f94"/></linearGradient></defs><path d="M0,2 Q0,0 2,0 L12,0 Q16,0 16,4 L16,13.5 Q16,16 13.5,16 L2,16 Q0,16 0,14 Z" fill="url(#ig17_327)"/><path d="M0,12.3 L5.8,12.3 Q8,12.3 8,10.4 Q8,9.2 6.3,8.4 L3.5,7.1 Q2,6.4 2,5.2 Q2,3.6 4,3.6 L8.3,3.6 Q9.5,3.6 9.5,5 L9.5,13" fill="none" stroke="#fff" stroke-width="1.15"/><path d="M9.5,9 L11.3,9 Q12.5,9 12.5,10.3 L12.5,16" fill="none" stroke="#fff" stroke-width="1.15"/></svg><div class="" style="left:37px;top:327.84px;font-size:12px;line-height:14px;color:#000;white-space:nowrap;transform-origin:0 11.16px;letter-spacing:-0.3px;">Request "2398" from 01.12.2025</div><div style="left:806px;top:325px;width:32px;height:18px;border:1px solid #5b6e8c;border-radius:3px;background:linear-gradient(#d0dfef 0%,#c2d5ea 45%,#a5bfdc 50%,#b7cde6 100%);box-shadow:inset 0 0 0 1px rgba(255,255,255,0.35)"></div><div style="left:840px;top:325px;width:32px;height:18px;border:1px solid #5b6e8c;border-radius:3px;background:linear-gradient(#d0dfef 0%,#c2d5ea 45%,#a5bfdc 50%,#b7cde6 100%);box-shadow:inset 0 0 0 1px rgba(255,255,255,0.35)"></div><div style="left:874px;top:325px;width:32px;height:18px;border:1px solid #4a1d22;border-radius:3px;background:linear-gradient(#eaa99b 0%,#df8c78 45%,#c9462c 50%,#c85a3e 100%);box-shadow:inset 0 0 0 1px rgba(255,255,255,0.35)"></div><div style="left:816px;top:332px;width:11px;height:5px;border:1px solid #3a4250;border-radius:1px;background:linear-gradient(#fff,#dcdcdc)"></div><div style="left:850px;top:329px;width:11px;height:9px;border:1px solid #3a4250;border-radius:1px;background:linear-gradient(#fff,#dcdcdc)"><div style="left:2px;top:2px;width:5px;height:3px;border:1px solid #3a4250;background:#9fb0c8"></div></div><svg style="left:884px;top:329px" width="11" height="9" viewBox="0 0 11 9"><path d="M0.5,0.5 L4,0.5 L5.5,2.2 L7,0.5 L10.5,0.5 L7.3,4.5 L10.5,8.5 L7,8.5 L5.5,6.8 L4,8.5 L0.5,8.5 L3.7,4.5 Z" fill="#f4f4f4" stroke="#3a4250" stroke-width="1" stroke-linejoin="round"/></svg><div style="left:15px;top:346px;width:893px;height:303px;background:#f0f0f0;"></div><div style="left:18px;top:348px;width:41px;height:18px;background:#f0f0f0;border-top:1px solid #fff;border-left:1px solid #fff;border-radius:2px 2px 0 0;"></div><div style="left:103px;top:348px;width:80px;height:18px;background:#f0f0f0;border-top:1px solid #fff;border-left:1px solid #fff;border-radius:2px 2px 0 0;border-right:1px solid #696969;box-shadow:inset -1px 0 0 #a0a0a0;"></div><div style="left:182px;top:348px;width:47px;height:18px;background:#f0f0f0;border-top:1px solid #fff;border-left:1px solid #fff;border-radius:2px 2px 0 0;border-right:1px solid #696969;box-shadow:inset -1px 0 0 #a0a0a0;"></div><div style="left:58px;top:346px;width:46px;height:21px;background:#f0f0f0;border-top:1px solid #fff;border-left:1px solid #fff;border-radius:2px 2px 0 0;border-right:1px solid #696969;box-shadow:inset -1px 0 0 #a0a0a0;"></div><div class="t" style="left:24px;top:351.19px;font-size:11px;line-height:14px;color:#000;white-space:nowrap;transform-origin:0 10.81px;letter-spacing:-0.2px;">Title</div><div class="t" style="left:66px;top:349.19px;font-size:11px;line-height:14px;color:#000;white-space:nowrap;transform-origin:0 10.81px;letter-spacing:-0.2px;">Goods</div><div class="t" style="left:109px;top:351.19px;font-size:11px;line-height:14px;color:#000;white-space:nowrap;transform-origin:0 10.81px;letter-spacing:-0.3px;">Parent request</div><div class="t" style="left:190px;top:351.19px;font-size:11px;line-height:14px;color:#000;white-space:nowrap;transform-origin:0 10.81px;letter-spacing:-0.2px;">Routes</div><div style="left:15px;top:366px;width:892px;height:1px;background:#fff;"></div><div style="left:15px;top:366px;width:1px;height:283px;background:#fff;"></div><div style="left:907px;top:366px;width:1px;height:283px;background:#696969;"></div><div style="left:906px;top:367px;width:1px;height:281px;background:#a0a0a0;"></div><div style="left:16px;top:367px;width:890px;height:1px;background:#e3e3e3;"></div><div style="left:16px;top:367px;width:1px;height:280px;background:#e3e3e3;"></div><div style="left:15px;top:648px;width:893px;height:1px;background:#696969;"></div><div style="left:16px;top:647px;width:891px;height:1px;background:#a0a0a0;"></div><div style="left:19px;top:370px;width:868px;height:142px;overflow:hidden;background:#fff"><div style="left:0px;top:0px;width:1200px;height:53px;background:#f0f0f0;"></div><div style="left:0px;top:0px;width:1181px;height:1px;background:#fff;"></div><div style="left:0px;top:0px;width:68px;height:1px;background:#ffffff;"></div><div style="left:0px;top:0px;width:1px;height:53px;background:#ffffff;"></div><div style="left:67px;top:0px;width:1px;height:53px;background:#a0a0a0;"></div><div style="left:0px;top:52px;width:68px;height:1px;background:#a0a0a0;"></div><div style="left:68px;top:0px;width:1px;height:54px;background:#000;"></div><div style="left:0px;top:53px;width:68px;height:1px;background:#000;"></div><div style="left:69px;top:0px;width:725px;height:1px;background:#ffffff;"></div><div style="left:69px;top:0px;width:1px;height:17px;background:#ffffff;"></div><div style="left:793px;top:0px;width:1px;height:17px;background:#a0a0a0;"></div><div style="left:69px;top:16px;width:725px;height:1px;background:#a0a0a0;"></div><div style="left:794px;top:0px;width:1px;height:18px;background:#000;"></div><div style="left:68px;top:17px;width:726px;height:1px;background:#000;"></div><div style="left:795px;top:0px;width:386px;height:1px;background:#ffffff;"></div><div style="left:795px;top:0px;width:1px;height:17px;background:#ffffff;"></div><div style="left:1180px;top:0px;width:1px;height:17px;background:#a0a0a0;"></div><div style="left:795px;top:16px;width:386px;height:1px;background:#a0a0a0;"></div><div style="left:1181px;top:0px;width:1px;height:18px;background:#000;"></div><div style="left:794px;top:17px;width:387px;height:1px;background:#000;"></div><div style="left:69px;top:18px;width:426px;height:1px;background:#ffffff;"></div><div style="left:69px;top:18px;width:1px;height:17px;background:#ffffff;"></div><div style="left:494px;top:18px;width:1px;height:17px;background:#a0a0a0;"></div><div style="left:69px;top:34px;width:426px;height:1px;background:#a0a0a0;"></div><div style="left:495px;top:17px;width:1px;height:19px;background:#000;"></div><div style="left:68px;top:35px;width:427px;height:1px;background:#000;"></div><div style="left:496px;top:18px;width:100px;height:1px;background:#ffffff;"></div><div style="left:496px;top:18px;width:1px;height:35px;background:#ffffff;"></div><div style="left:595px;top:18px;width:1px;height:35px;background:#a0a0a0;"></div><div style="left:496px;top:52px;width:100px;height:1px;background:#a0a0a0;"></div><div style="left:596px;top:17px;width:1px;height:37px;background:#000;"></div><div style="left:495px;top:53px;width:101px;height:1px;background:#000;"></div><div style="left:597px;top:18px;width:197px;height:1px;background:#ffffff;"></div><div style="left:597px;top:18px;width:1px;height:17px;background:#ffffff;"></div><div style="left:793px;top:18px;width:1px;height:17px;background:#a0a0a0;"></div><div style="left:597px;top:34px;width:197px;height:1px;background:#a0a0a0;"></div><div style="left:794px;top:17px;width:1px;height:19px;background:#000;"></div><div style="left:596px;top:35px;width:198px;height:1px;background:#000;"></div><div style="left:795px;top:18px;width:386px;height:1px;background:#ffffff;"></div><div style="left:795px;top:18px;width:1px;height:17px;background:#ffffff;"></div><div style="left:1180px;top:18px;width:1px;height:17px;background:#a0a0a0;"></div><div style="left:795px;top:34px;width:386px;height:1px;background:#a0a0a0;"></div><div style="left:1181px;top:17px;width:1px;height:19px;background:#000;"></div><div style="left:794px;top:35px;width:387px;height:1px;background:#000;"></div><div style="left:69px;top:36px;width:68px;height:1px;background:#ffffff;"></div><div style="left:69px;top:36px;width:1px;height:17px;background:#ffffff;"></div><div style="left:136px;top:36px;width:1px;height:17px;background:#a0a0a0;"></div><div style="left:69px;top:52px;width:68px;height:1px;background:#a0a0a0;"></div><div style="left:137px;top:35px;width:1px;height:19px;background:#000;"></div><div style="left:68px;top:53px;width:69px;height:1px;background:#000;"></div><div style="left:138px;top:36px;width:134px;height:1px;background:#ffffff;"></div><div style="left:138px;top:36px;width:1px;height:17px;background:#ffffff;"></div><div style="left:271px;top:36px;width:1px;height:17px;background:#a0a0a0;"></div><div style="left:138px;top:52px;width:134px;height:1px;background:#a0a0a0;"></div><div style="left:272px;top:35px;width:1px;height:19px;background:#000;"></div><div style="left:137px;top:53px;width:135px;height:1px;background:#000;"></div><div style="left:273px;top:36px;width:56px;height:1px;background:#ffffff;"></div><div style="left:273px;top:36px;width:1px;height:17px;background:#ffffff;"></div><div style="left:328px;top:36px;width:1px;height:17px;background:#a0a0a0;"></div><div style="left:273px;top:52px;width:56px;height:1px;background:#a0a0a0;"></div><div style="left:329px;top:35px;width:1px;height:19px;background:#000;"></div><div style="left:272px;top:53px;width:57px;height:1px;background:#000;"></div><div style="left:330px;top:36px;width:117px;height:1px;background:#ffffff;"></div><div style="left:330px;top:36px;width:1px;height:17px;background:#ffffff;"></div><div style="left:446px;top:36px;width:1px;height:17px;background:#a0a0a0;"></div><div style="left:330px;top:52px;width:117px;height:1px;background:#a0a0a0;"></div><div style="left:447px;top:35px;width:1px;height:19px;background:#000;"></div><div style="left:329px;top:53px;width:118px;height:1px;background:#000;"></div><div style="left:448px;top:36px;width:47px;height:1px;background:#ffffff;"></div><div style="left:448px;top:36px;width:1px;height:17px;background:#ffffff;"></div><div style="left:494px;top:36px;width:1px;height:17px;background:#a0a0a0;"></div><div style="left:448px;top:52px;width:47px;height:1px;background:#a0a0a0;"></div><div style="left:495px;top:35px;width:1px;height:19px;background:#000;"></div><div style="left:447px;top:53px;width:48px;height:1px;background:#000;"></div><div style="left:597px;top:36px;width:92px;height:1px;background:#ffffff;"></div><div style="left:597px;top:36px;width:1px;height:17px;background:#ffffff;"></div><div style="left:688px;top:36px;width:1px;height:17px;background:#a0a0a0;"></div><div style="left:597px;top:52px;width:92px;height:1px;background:#a0a0a0;"></div><div style="left:689px;top:35px;width:1px;height:19px;background:#000;"></div><div style="left:596px;top:53px;width:93px;height:1px;background:#000;"></div><div style="left:690px;top:36px;width:104px;height:1px;background:#ffffff;"></div><div style="left:690px;top:36px;width:1px;height:17px;background:#ffffff;"></div><div style="left:793px;top:36px;width:1px;height:17px;background:#a0a0a0;"></div><div style="left:690px;top:52px;width:104px;height:1px;background:#a0a0a0;"></div><div style="left:794px;top:35px;width:1px;height:19px;background:#000;"></div><div style="left:689px;top:53px;width:105px;height:1px;background:#000;"></div><div style="left:795px;top:36px;width:35px;height:1px;background:#ffffff;"></div><div style="left:795px;top:36px;width:1px;height:17px;background:#ffffff;"></div><div style="left:829px;top:36px;width:1px;height:17px;background:#a0a0a0;"></div><div style="left:795px;top:52px;width:35px;height:1px;background:#a0a0a0;"></div><div style="left:830px;top:35px;width:1px;height:19px;background:#000;"></div><div style="left:794px;top:53px;width:36px;height:1px;background:#000;"></div><div style="left:831px;top:36px;width:155px;height:1px;background:#ffffff;"></div><div style="left:831px;top:36px;width:1px;height:17px;background:#ffffff;"></div><div style="left:985px;top:36px;width:1px;height:17px;background:#a0a0a0;"></div><div style="left:831px;top:52px;width:155px;height:1px;background:#a0a0a0;"></div><div style="left:986px;top:35px;width:1px;height:19px;background:#000;"></div><div style="left:830px;top:53px;width:156px;height:1px;background:#000;"></div><div class="t" style="left:5px;top:20.19px;font-size:11px;line-height:14px;color:#000;white-space:nowrap;transform-origin:0 10.81px;letter-spacing:0px;">#</div><div class="t" style="left:73px;top:2.19px;font-size:11px;line-height:14px;color:#000;white-space:nowrap;transform-origin:0 10.81px;letter-spacing:0.1px;">ORDER</div><div class="t" style="left:799px;top:2.19px;font-size:11px;line-height:14px;color:#000;white-space:nowrap;transform-origin:0 10.81px;letter-spacing:-0.3px;">Receipt for order from</div><div class="t" style="left:73px;top:20.19px;font-size:11px;line-height:14px;color:#000;white-space:nowrap;transform-origin:0 10.81px;letter-spacing:-0.3px;">Goods</div><div class="t" style="left:500px;top:29.19px;font-size:11px;line-height:14px;color:#000;white-space:nowrap;transform-origin:0 10.81px;letter-spacing:-0.3px;">Quantity</div><div class="t" style="left:601px;top:20.19px;font-size:11px;line-height:14px;color:#000;white-space:nowrap;transform-origin:0 10.81px;letter-spacing:-0.3px;">Set</div><div class="t" style="left:799px;top:20.19px;font-size:11px;line-height:14px;color:#000;white-space:nowrap;transform-origin:0 10.81px;letter-spacing:-0.3px;">Route</div><div style="left:69px;top:29px;width:68px;height:26px;overflow:hidden;"><div class="t" style="left:4px;top:9.19px;font-size:11px;line-height:14px;color:#000;white-space:nowrap;transform-origin:0 10.81px;letter-spacing:-0.3px;">Code</div></div><div style="left:138px;top:29px;width:134px;height:26px;overflow:hidden;"><div class="t" style="left:4px;top:9.19px;font-size:11px;line-height:14px;color:#000;white-space:nowrap;transform-origin:0 10.81px;letter-spacing:-0.3px;">Product</div></div><div style="left:273px;top:29px;width:56px;height:26px;overflow:hidden;"><div class="t" style="left:4px;top:9.19px;font-size:11px;line-height:14px;color:#000;white-space:nowrap;transform-origin:0 10.81px;letter-spacing:-0.3px;">UOM</div></div><div style="left:330px;top:29px;width:117px;height:26px;overflow:hidden;"><div class="t" style="left:4px;top:9.19px;font-size:11px;line-height:14px;color:#000;white-space:nowrap;transform-origin:0 10.81px;letter-spacing:0px;">Идентификатор для изделия</div></div><div style="left:448px;top:29px;width:47px;height:26px;overflow:hidden;"><div class="t" style="left:4px;top:9.19px;font-size:11px;line-height:14px;color:#000;white-space:nowrap;transform-origin:0 10.81px;letter-spacing:0px;">Индикатор</div></div><div style="left:597px;top:29px;width:92px;height:26px;overflow:hidden;"><div class="t" style="left:4px;top:9.19px;font-size:11px;line-height:14px;color:#000;white-space:nowrap;transform-origin:0 10.81px;letter-spacing:-0.3px;">Name</div></div><div style="left:690px;top:29px;width:104px;height:26px;overflow:hidden;"><div class="t" style="left:4px;top:9.19px;font-size:11px;line-height:14px;color:#000;white-space:nowrap;transform-origin:0 10.81px;letter-spacing:-0.3px;">Version</div></div><div style="left:795px;top:29px;width:35px;height:26px;overflow:hidden;"><div class="t" style="left:4px;top:9.19px;font-size:11px;line-height:14px;color:#000;white-space:nowrap;transform-origin:0 10.81px;letter-spacing:-0.3px;">Doc</div></div><div style="left:831px;top:29px;width:155px;height:26px;overflow:hidden;"><div class="t" style="left:4px;top:9.19px;font-size:11px;line-height:14px;color:#000;white-space:nowrap;transform-origin:0 10.81px;letter-spacing:-0.3px;">Supplier</div></div><div style="left:0px;top:69px;width:1181px;height:1px;background:#c8c8c8;"></div><div style="left:496px;top:54px;width:100px;height:15px;background:#dcfcfc;"></div><div style="left:795px;top:54px;width:35px;height:15px;background:#d9d5cf;"></div><div style="left:69px;top:54px;width:68px;height:15px;background:#f0f0f0;"></div><div style="left:0px;top:85px;width:1181px;height:1px;background:#c8c8c8;"></div><div style="left:496px;top:70px;width:100px;height:15px;background:#dcfcfc;"></div><div style="left:795px;top:70px;width:35px;height:15px;background:#d9d5cf;"></div><div style="left:0px;top:101px;width:1181px;height:1px;background:#c8c8c8;"></div><div style="left:496px;top:86px;width:100px;height:15px;background:#dcfcfc;"></div><div style="left:795px;top:86px;width:35px;height:15px;background:#d9d5cf;"></div><div style="left:0px;top:117px;width:1181px;height:1px;background:#c8c8c8;"></div><div style="left:496px;top:102px;width:100px;height:15px;background:#dcfcfc;"></div><div style="left:795px;top:102px;width:35px;height:15px;background:#d9d5cf;"></div><div style="left:0px;top:133px;width:1181px;height:1px;background:#c8c8c8;"></div><div style="left:496px;top:118px;width:100px;height:15px;background:#dcfcfc;"></div><div style="left:795px;top:118px;width:35px;height:15px;background:#d9d5cf;"></div><div style="left:0px;top:149px;width:1181px;height:1px;background:#c8c8c8;"></div><div style="left:496px;top:134px;width:100px;height:15px;background:#dcfcfc;"></div><div style="left:795px;top:134px;width:35px;height:15px;background:#d9d5cf;"></div><div style="left:68px;top:54px;width:1px;height:96px;background:#c8c8c8;"></div><div style="left:137px;top:54px;width:1px;height:96px;background:#c8c8c8;"></div><div style="left:272px;top:54px;width:1px;height:96px;background:#c8c8c8;"></div><div style="left:329px;top:54px;width:1px;height:96px;background:#c8c8c8;"></div><div style="left:447px;top:54px;width:1px;height:96px;background:#c8c8c8;"></div><div style="left:495px;top:54px;width:1px;height:96px;background:#c8c8c8;"></div><div style="left:596px;top:54px;width:1px;height:96px;background:#c8c8c8;"></div><div style="left:689px;top:54px;width:1px;height:96px;background:#c8c8c8;"></div><div style="left:794px;top:54px;width:1px;height:96px;background:#c8c8c8;"></div><div style="left:830px;top:54px;width:1px;height:96px;background:#c8c8c8;"></div><div style="left:1px;top:46px;width:67px;height:26px;overflow:hidden;"><div class="t" style="right:2px;top:9.19px;transform-origin:0 10.81px;font-size:11px;line-height:14px;white-space:nowrap;letter-spacing:0px;color:#000">1</div></div><div style="left:69px;top:46px;width:68px;height:26px;overflow:hidden;"><div class="t" style="right:2px;top:9.19px;transform-origin:0 10.81px;font-size:11px;line-height:14px;white-space:nowrap;letter-spacing:-0.1px;color:#000">195</div></div><div style="left:138px;top:46px;width:134px;height:26px;overflow:hidden;"><div class="t" style="left:2px;top:9.19px;font-size:11px;line-height:14px;color:#000;white-space:nowrap;transform-origin:0 10.81px;letter-spacing:-0.15px;">Egg chicken</div></div><div style="left:273px;top:46px;width:56px;height:26px;overflow:hidden;"><div class="t" style="left:2px;top:9.19px;font-size:11px;line-height:14px;color:#000;white-space:nowrap;transform-origin:0 10.81px;letter-spacing:-0.1px;">кг.</div></div><div style="left:496px;top:46px;width:100px;height:26px;overflow:hidden;"><div class="t" style="right:2px;top:9.19px;transform-origin:0 10.81px;font-size:11px;line-height:14px;white-space:nowrap;letter-spacing:-0.1px;color:#000">1,600</div></div><div style="left:597px;top:46px;width:92px;height:26px;overflow:hidden;"><div class="t" style="left:2px;top:9.19px;font-size:11px;line-height:14px;color:#000;white-space:nowrap;transform-origin:0 10.81px;letter-spacing:-0.15px;"></div></div><div style="left:690px;top:46px;width:104px;height:26px;overflow:hidden;"><div class="t" style="left:2px;top:9.19px;font-size:11px;line-height:14px;color:#000;white-space:nowrap;transform-origin:0 10.81px;letter-spacing:-0.1px;"></div></div><div style="left:795px;top:46px;width:35px;height:26px;overflow:hidden;"><div class="t" style="left:2px;top:9.19px;font-size:11px;line-height:14px;color:#000;white-space:nowrap;transform-origin:0 10.81px;letter-spacing:0px;">I/T</div></div><div style="left:831px;top:46px;width:155px;height:26px;overflow:hidden;"><div class="t" style="left:2px;top:9.19px;font-size:11px;line-height:14px;color:#000;white-space:nowrap;transform-origin:0 10.81px;letter-spacing:0px;">Основной склад</div></div><div style="left:1px;top:62px;width:67px;height:26px;overflow:hidden;"><div class="t" style="right:2px;top:9.19px;transform-origin:0 10.81px;font-size:11px;line-height:14px;white-space:nowrap;letter-spacing:0px;color:#000">2</div></div><div style="left:69px;top:62px;width:68px;height:26px;overflow:hidden;"><div class="t" style="right:2px;top:9.19px;transform-origin:0 10.81px;font-size:11px;line-height:14px;white-space:nowrap;letter-spacing:-0.1px;color:#000">360</div></div><div style="left:138px;top:62px;width:134px;height:26px;overflow:hidden;"><div class="t" style="left:2px;top:9.19px;font-size:11px;line-height:14px;color:#000;white-space:nowrap;transform-origin:0 10.81px;letter-spacing:-0.15px;">sour cream15%</div></div><div style="left:273px;top:62px;width:56px;height:26px;overflow:hidden;"><div class="t" style="left:2px;top:9.19px;font-size:11px;line-height:14px;color:#000;white-space:nowrap;transform-origin:0 10.81px;letter-spacing:-0.1px;">кг.</div></div><div style="left:496px;top:62px;width:100px;height:26px;overflow:hidden;"><div class="t" style="right:2px;top:9.19px;transform-origin:0 10.81px;font-size:11px;line-height:14px;white-space:nowrap;letter-spacing:-0.1px;color:#000">1,500</div></div><div style="left:597px;top:62px;width:92px;height:26px;overflow:hidden;"><div class="t" style="left:2px;top:9.19px;font-size:11px;line-height:14px;color:#000;white-space:nowrap;transform-origin:0 10.81px;letter-spacing:-0.15px;"></div></div><div style="left:690px;top:62px;width:104px;height:26px;overflow:hidden;"><div class="t" style="left:2px;top:9.19px;font-size:11px;line-height:14px;color:#000;white-space:nowrap;transform-origin:0 10.81px;letter-spacing:-0.1px;"></div></div><div style="left:795px;top:62px;width:35px;height:26px;overflow:hidden;"><div class="t" style="left:2px;top:9.19px;font-size:11px;line-height:14px;color:#000;white-space:nowrap;transform-origin:0 10.81px;letter-spacing:0px;">I/T</div></div><div style="left:831px;top:62px;width:155px;height:26px;overflow:hidden;"><div class="t" style="left:2px;top:9.19px;font-size:11px;line-height:14px;color:#000;white-space:nowrap;transform-origin:0 10.81px;letter-spacing:0px;">Основной склад</div></div><div style="left:1px;top:78px;width:67px;height:26px;overflow:hidden;"><div class="t" style="right:2px;top:9.19px;transform-origin:0 10.81px;font-size:11px;line-height:14px;white-space:nowrap;letter-spacing:0px;color:#000">3</div></div><div style="left:69px;top:78px;width:68px;height:26px;overflow:hidden;"><div class="t" style="right:2px;top:9.19px;transform-origin:0 10.81px;font-size:11px;line-height:14px;white-space:nowrap;letter-spacing:-0.1px;color:#000">401</div></div><div style="left:138px;top:78px;width:134px;height:26px;overflow:hidden;"><div class="t" style="left:2px;top:9.19px;font-size:11px;line-height:14px;color:#000;white-space:nowrap;transform-origin:0 10.81px;letter-spacing:-0.15px;">Sugar</div></div><div style="left:273px;top:78px;width:56px;height:26px;overflow:hidden;"><div class="t" style="left:2px;top:9.19px;font-size:11px;line-height:14px;color:#000;white-space:nowrap;transform-origin:0 10.81px;letter-spacing:-0.1px;">кг.</div></div><div style="left:496px;top:78px;width:100px;height:26px;overflow:hidden;"><div class="t" style="right:2px;top:9.19px;transform-origin:0 10.81px;font-size:11px;line-height:14px;white-space:nowrap;letter-spacing:-0.1px;color:#000">3,000</div></div><div style="left:597px;top:78px;width:92px;height:26px;overflow:hidden;"><div class="t" style="left:2px;top:9.19px;font-size:11px;line-height:14px;color:#000;white-space:nowrap;transform-origin:0 10.81px;letter-spacing:-0.15px;"></div></div><div style="left:690px;top:78px;width:104px;height:26px;overflow:hidden;"><div class="t" style="left:2px;top:9.19px;font-size:11px;line-height:14px;color:#000;white-space:nowrap;transform-origin:0 10.81px;letter-spacing:-0.1px;"></div></div><div style="left:795px;top:78px;width:35px;height:26px;overflow:hidden;"><div class="t" style="left:2px;top:9.19px;font-size:11px;line-height:14px;color:#000;white-space:nowrap;transform-origin:0 10.81px;letter-spacing:0px;">I/T</div></div><div style="left:831px;top:78px;width:155px;height:26px;overflow:hidden;"><div class="t" style="left:2px;top:9.19px;font-size:11px;line-height:14px;color:#000;white-space:nowrap;transform-origin:0 10.81px;letter-spacing:0px;">Основной склад</div></div><div style="left:1px;top:94px;width:67px;height:26px;overflow:hidden;"><div class="t" style="right:2px;top:9.19px;transform-origin:0 10.81px;font-size:11px;line-height:14px;white-space:nowrap;letter-spacing:0px;color:#000">4</div></div><div style="left:69px;top:94px;width:68px;height:26px;overflow:hidden;"><div class="t" style="right:2px;top:9.19px;transform-origin:0 10.81px;font-size:11px;line-height:14px;white-space:nowrap;letter-spacing:-0.1px;color:#000">413</div></div><div style="left:138px;top:94px;width:134px;height:26px;overflow:hidden;"><div class="t" style="left:2px;top:9.19px;font-size:11px;line-height:14px;color:#000;white-space:nowrap;transform-origin:0 10.81px;letter-spacing:-0.15px;">flour</div></div><div style="left:273px;top:94px;width:56px;height:26px;overflow:hidden;"><div class="t" style="left:2px;top:9.19px;font-size:11px;line-height:14px;color:#000;white-space:nowrap;transform-origin:0 10.81px;letter-spacing:-0.1px;">кг.</div></div><div style="left:496px;top:94px;width:100px;height:26px;overflow:hidden;"><div class="t" style="right:2px;top:9.19px;transform-origin:0 10.81px;font-size:11px;line-height:14px;white-space:nowrap;letter-spacing:-0.1px;color:#000">5,000</div></div><div style="left:597px;top:94px;width:92px;height:26px;overflow:hidden;"><div class="t" style="left:2px;top:9.19px;font-size:11px;line-height:14px;color:#000;white-space:nowrap;transform-origin:0 10.81px;letter-spacing:-0.15px;"></div></div><div style="left:690px;top:94px;width:104px;height:26px;overflow:hidden;"><div class="t" style="left:2px;top:9.19px;font-size:11px;line-height:14px;color:#000;white-space:nowrap;transform-origin:0 10.81px;letter-spacing:-0.1px;"></div></div><div style="left:795px;top:94px;width:35px;height:26px;overflow:hidden;"><div class="t" style="left:2px;top:9.19px;font-size:11px;line-height:14px;color:#000;white-space:nowrap;transform-origin:0 10.81px;letter-spacing:0px;">I/T</div></div><div style="left:831px;top:94px;width:155px;height:26px;overflow:hidden;"><div class="t" style="left:2px;top:9.19px;font-size:11px;line-height:14px;color:#000;white-space:nowrap;transform-origin:0 10.81px;letter-spacing:0px;">Основной склад</div></div><div style="left:1px;top:110px;width:67px;height:26px;overflow:hidden;"><div class="t" style="right:2px;top:9.19px;transform-origin:0 10.81px;font-size:11px;line-height:14px;white-space:nowrap;letter-spacing:0px;color:#000">5</div></div><div style="left:69px;top:110px;width:68px;height:26px;overflow:hidden;"><div class="t" style="right:2px;top:9.19px;transform-origin:0 10.81px;font-size:11px;line-height:14px;white-space:nowrap;letter-spacing:-0.1px;color:#000">444</div></div><div style="left:138px;top:110px;width:134px;height:26px;overflow:hidden;"><div class="t" style="left:2px;top:9.19px;font-size:11px;line-height:14px;color:#000;white-space:nowrap;transform-origin:0 10.81px;letter-spacing:-0.15px;">powdered sugar</div></div><div style="left:273px;top:110px;width:56px;height:26px;overflow:hidden;"><div class="t" style="left:2px;top:9.19px;font-size:11px;line-height:14px;color:#000;white-space:nowrap;transform-origin:0 10.81px;letter-spacing:-0.1px;">кг.</div></div><div style="left:496px;top:110px;width:100px;height:26px;overflow:hidden;"><div class="t" style="right:2px;top:9.19px;transform-origin:0 10.81px;font-size:11px;line-height:14px;white-space:nowrap;letter-spacing:-0.1px;color:#000">1,500</div></div><div style="left:597px;top:110px;width:92px;height:26px;overflow:hidden;"><div class="t" style="left:2px;top:9.19px;font-size:11px;line-height:14px;color:#000;white-space:nowrap;transform-origin:0 10.81px;letter-spacing:-0.15px;"></div></div><div style="left:690px;top:110px;width:104px;height:26px;overflow:hidden;"><div class="t" style="left:2px;top:9.19px;font-size:11px;line-height:14px;color:#000;white-space:nowrap;transform-origin:0 10.81px;letter-spacing:-0.1px;"></div></div><div style="left:795px;top:110px;width:35px;height:26px;overflow:hidden;"><div class="t" style="left:2px;top:9.19px;font-size:11px;line-height:14px;color:#000;white-space:nowrap;transform-origin:0 10.81px;letter-spacing:0px;">I/T</div></div><div style="left:831px;top:110px;width:155px;height:26px;overflow:hidden;"><div class="t" style="left:2px;top:9.19px;font-size:11px;line-height:14px;color:#000;white-space:nowrap;transform-origin:0 10.81px;letter-spacing:0px;">Основной склад</div></div><div style="left:1px;top:126px;width:67px;height:26px;overflow:hidden;"><div class="t" style="right:2px;top:9.19px;transform-origin:0 10.81px;font-size:11px;line-height:14px;white-space:nowrap;letter-spacing:0px;color:#000">6</div></div><div style="left:69px;top:126px;width:68px;height:26px;overflow:hidden;"><div class="t" style="right:2px;top:9.19px;transform-origin:0 10.81px;font-size:11px;line-height:14px;white-space:nowrap;letter-spacing:-0.1px;color:#000">1053</div></div><div style="left:138px;top:126px;width:134px;height:26px;overflow:hidden;"><div class="t" style="left:2px;top:9.19px;font-size:11px;line-height:14px;color:#000;white-space:nowrap;transform-origin:0 10.81px;letter-spacing:-0.15px;">Чернослив сушеный</div></div><div style="left:273px;top:126px;width:56px;height:26px;overflow:hidden;"><div class="t" style="left:2px;top:9.19px;font-size:11px;line-height:14px;color:#000;white-space:nowrap;transform-origin:0 10.81px;letter-spacing:-0.1px;">кг.</div></div><div style="left:496px;top:126px;width:100px;height:26px;overflow:hidden;"><div class="t" style="right:2px;top:9.19px;transform-origin:0 10.81px;font-size:11px;line-height:14px;white-space:nowrap;letter-spacing:-0.1px;color:#000">2,000</div></div><div style="left:597px;top:126px;width:92px;height:26px;overflow:hidden;"><div class="t" style="left:2px;top:9.19px;font-size:11px;line-height:14px;color:#000;white-space:nowrap;transform-origin:0 10.81px;letter-spacing:-0.15px;"></div></div><div style="left:690px;top:126px;width:104px;height:26px;overflow:hidden;"><div class="t" style="left:2px;top:9.19px;font-size:11px;line-height:14px;color:#000;white-space:nowrap;transform-origin:0 10.81px;letter-spacing:-0.1px;"></div></div><div style="left:795px;top:126px;width:35px;height:26px;overflow:hidden;"><div class="t" style="left:2px;top:9.19px;font-size:11px;line-height:14px;color:#000;white-space:nowrap;transform-origin:0 10.81px;letter-spacing:0px;">I/T</div></div><div style="left:831px;top:126px;width:155px;height:26px;overflow:hidden;"><div class="t" style="left:2px;top:9.19px;font-size:11px;line-height:14px;color:#000;white-space:nowrap;transform-origin:0 10.81px;letter-spacing:0px;">Основной склад</div></div></div><div style="left:887px;top:370px;width:17px;height:142px;background:#f0f0f0;"></div><div style="left:888px;top:387px;width:15px;height:60px;background:#cdcdcd;"></div><div style="left:19px;top:512px;width:868px;height:16px;background:#f0f0f0;"></div><div style="left:887px;top:512px;width:17px;height:16px;background:#f0f0f0;"></div><div style="left:36px;top:513px;width:167px;height:15px;background:#cdcdcd;"></div><svg style="left:891px;top:376px" width="9" height="7" viewBox="0 0 9 7"><path d="M1,5 L4.5,1.5 L8,5" fill="none" stroke="#505050" stroke-width="2.1"/></svg><svg style="left:891px;top:500px" width="9" height="7" viewBox="0 0 9 7"><path d="M1,1.5 L4.5,5 L8,1.5" fill="none" stroke="#505050" stroke-width="2.1"/></svg><svg style="left:24px;top:516px" width="7" height="9" viewBox="0 0 7 9"><path d="M5,1 L1.5,4.5 L5,8" fill="none" stroke="#505050" stroke-width="2.1"/></svg><svg style="left:876px;top:516px" width="7" height="9" viewBox="0 0 7 9"><path d="M1.5,1 L5,4.5 L1.5,8" fill="none" stroke="#505050" stroke-width="2.1"/></svg><div style="left:19px;top:537px;width:884px;height:107px;border:1px solid #a0a0a0;box-shadow:inset 1px 1px 0 #fff, 1px 1px 0 #fff;"></div><div style="left:21px;top:547px;width:881px;height:96px;background:#fff;"></div><div style="left:26px;top:533px;width:46px;height:10px;background:#f0f0f0;"></div><div class="t" style="left:28px;top:532.19px;font-size:11px;line-height:14px;color:#000;white-space:nowrap;transform-origin:0 10.81px;letter-spacing:-0.3px;">Modifiers</div><div style="left:21px;top:547px;width:326px;height:18px;background:#f0f0f0;"></div><div style="left:21px;top:547px;width:68px;height:1px;background:#ffffff;"></div><div style="left:21px;top:547px;width:1px;height:17px;background:#ffffff;"></div><div style="left:88px;top:547px;width:1px;height:17px;background:#a0a0a0;"></div><div style="left:21px;top:563px;width:68px;height:1px;background:#a0a0a0;"></div><div style="left:89px;top:547px;width:1px;height:18px;background:#000;"></div><div style="left:21px;top:564px;width:68px;height:1px;background:#000;"></div><div style="left:90px;top:547px;width:134px;height:1px;background:#ffffff;"></div><div style="left:90px;top:547px;width:1px;height:17px;background:#ffffff;"></div><div style="left:223px;top:547px;width:1px;height:17px;background:#a0a0a0;"></div><div style="left:90px;top:563px;width:134px;height:1px;background:#a0a0a0;"></div><div style="left:224px;top:547px;width:1px;height:18px;background:#000;"></div><div style="left:89px;top:564px;width:135px;height:1px;background:#000;"></div><div style="left:225px;top:547px;width:56px;height:1px;background:#ffffff;"></div><div style="left:225px;top:547px;width:1px;height:17px;background:#ffffff;"></div><div style="left:280px;top:547px;width:1px;height:17px;background:#a0a0a0;"></div><div style="left:225px;top:563px;width:56px;height:1px;background:#a0a0a0;"></div><div style="left:281px;top:547px;width:1px;height:18px;background:#000;"></div><div style="left:224px;top:564px;width:57px;height:1px;background:#000;"></div><div style="left:282px;top:547px;width:65px;height:1px;background:#ffffff;"></div><div style="left:282px;top:547px;width:1px;height:17px;background:#ffffff;"></div><div style="left:346px;top:547px;width:1px;height:17px;background:#a0a0a0;"></div><div style="left:282px;top:563px;width:65px;height:1px;background:#a0a0a0;"></div><div style="left:347px;top:547px;width:1px;height:18px;background:#000;"></div><div style="left:281px;top:564px;width:66px;height:1px;background:#000;"></div><div class="t" style="left:25px;top:549.19px;font-size:11px;line-height:14px;color:#000;white-space:nowrap;transform-origin:0 10.81px;letter-spacing:-0.3px;">Code</div><div class="t" style="left:93px;top:549.19px;font-size:11px;line-height:14px;color:#000;white-space:nowrap;transform-origin:0 10.81px;letter-spacing:-0.3px;">Set</div><div class="t" style="left:228px;top:549.19px;font-size:11px;line-height:14px;color:#000;white-space:nowrap;transform-origin:0 10.81px;letter-spacing:-0.3px;">UOM</div><div class="t" style="left:285px;top:549.19px;font-size:11px;line-height:14px;color:#000;white-space:nowrap;transform-origin:0 10.81px;letter-spacing:-0.3px;">Quantity</div><div style="left:7px;top:655px;width:907px;height:1px;background:#2bd0ef;"></div><div style="left:7px;top:656px;width:907px;height:1px;background:#000;"></div><div style="left:0px;top:657px;width:914px;height:1px;background:#f0f0f0;"></div></body></html>
